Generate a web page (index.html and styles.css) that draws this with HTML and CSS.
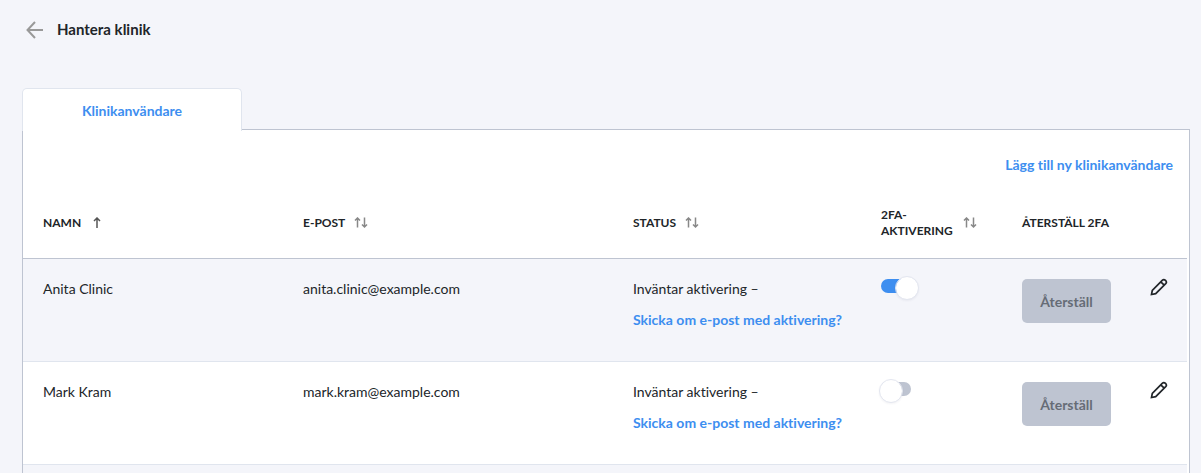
FILE: index.html
```html
<!DOCTYPE html>
<html lang="sv">
<head>
<meta charset="utf-8">
<meta name="viewport" content="width=device-width, initial-scale=1">
<title>Hantera klinik</title>
<link rel="stylesheet" href="styles.css">
</head>
<body>
<svg class="symbols" aria-hidden="true">
  <symbol id="up" viewBox="0 0 8 12"><path d="M4 11V1M1 4L4 1L7 4"/></symbol>
  <symbol id="sort" viewBox="0 0 14 12"><path d="M3.500 10.500V1M1 3.500L3.500 1L6 3.500M10.500 .5V10M8 7.500L10.500 10L13 7.500"/></symbol>
  <symbol id="pencil" viewBox="0 0 18 18"><path d="M1.500 16.500L2.300 12.300L12.200 2.300Q13.800 .8 15.500 2.400Q17.200 4.100 15.700 5.700L5.700 15.600ZM10.800 3.800L14.200 7.200"/></symbol>
</svg>
<header class="page-header">
  <button class="icon-button back" type="button" aria-label="Tillbaka">
    <svg viewBox="0 0 18 18"><path d="M17 9H1.500M9 1L1.500 9L9 17"/></svg>
  </button>
  <h1 class="title">Hantera klinik</h1>
</header>
<main class="content">
  <div class="tabs" role="tablist">
    <button class="tab" type="button" role="tab" aria-selected="true">Klinikanvändare</button>
  </div>
  <section class="panel">
    <div class="actions"><a class="link" href="#">Lägg till ny klinikanvändare</a></div>
    <table class="users">
      <colgroup>
        <col class="col-name"><col class="col-email"><col class="col-status"><col class="col-twofa"><col class="col-reset"><col class="col-edit">
      </colgroup>
      <thead>
        <tr>
          <th><span class="heading">Namn <svg class="arrow-up"><use href="#up"/></svg></span></th>
          <th><span class="heading">E-post <svg class="arrows"><use href="#sort"/></svg></span></th>
          <th><span class="heading">Status <svg class="arrows"><use href="#sort"/></svg></span></th>
          <th><span class="heading"><span class="wrap">2FA-aktivering</span> <svg class="arrows"><use href="#sort"/></svg></span></th>
          <th>Återställ 2FA</th>
          <td></td>
        </tr>
      </thead>
      <tbody>
        <tr>
          <td>Anita Clinic</td>
          <td>anita.clinic@example.com</td>
          <td><div class="status">Inväntar aktivering –</div><a class="link" href="#">Skicka om e-post med aktivering?</a></td>
          <td><input class="switch" type="checkbox" role="switch" aria-label="2FA-aktivering för Anita Clinic" checked></td>
          <td><button class="reset" type="button" disabled>Återställ</button></td>
          <td class="edit"><button class="icon-button" type="button" aria-label="Redigera Anita Clinic"><svg class="pencil"><use href="#pencil"/></svg></button></td>
        </tr>
        <tr>
          <td>Mark Kram</td>
          <td>mark.kram@example.com</td>
          <td><div class="status">Inväntar aktivering –</div><a class="link" href="#">Skicka om e-post med aktivering?</a></td>
          <td><input class="switch" type="checkbox" role="switch" aria-label="2FA-aktivering för Mark Kram"></td>
          <td><button class="reset" type="button" disabled>Återställ</button></td>
          <td class="edit"><button class="icon-button" type="button" aria-label="Redigera Mark Kram"><svg class="pencil"><use href="#pencil"/></svg></button></td>
        </tr>
        <tr><td colspan="6"></td></tr>
      </tbody>
    </table>
  </section>
</main>
</body>
</html>
```

FILE: styles.css
```css
* { box-sizing: border-box; }

body {
  display: flex;
  flex-direction: column;
  height: 100vh;
  margin: 0;
  padding: 0 11px 0 22px;
  overflow: hidden;
  background: #f4f5fa;
  color: #212529;
  font: 14px/20px Lato, "Open Sans", sans-serif;
  font-variant-ligatures: none;
}

svg {
  display: block;
  flex: none;
  fill: none;
  stroke: currentColor;
  stroke-width: 2;
}

.symbols { position: absolute; width: 0; height: 0; }

.page-header {
  display: flex;
  align-items: center;
  gap: 13px;
  height: 88px;
  padding: 0 4px 31px;
}

.title { margin: 0; font-size: 15px; line-height: 20px; font-weight: 700; }

.icon-button {
  display: block;
  padding: 0;
  border: 0;
  background: none;
  color: #212529;
  cursor: pointer;
}

.back { padding-top: 3px; color: #999; }
.back svg { width: 18px; height: 18px; }

.content { display: flex; flex: 1; flex-direction: column; min-height: 0; }

.tabs { display: flex; }

.tab {
  z-index: 1;
  width: 220px;
  height: 43px;
  margin-bottom: -2px;
  padding: 2px 0 0;
  border: 1px solid #e0e5ee;
  border-bottom: 0;
  border-radius: 5px 5px 0 0;
  background: #fff;
  color: #3d8ef0;
  font: inherit;
  font-variant-ligatures: none;
  font-weight: 700;
}

.panel {
  flex: 1;
  min-height: 0;
  padding-right: 2px;
  overflow: hidden;
  border: 1px solid #bec4d1;
  border-bottom: 0;
  background: #fff;
}

.actions { padding: 25px 14px 12px 0; text-align: right; }

.link { color: #3d8ef0; font-weight: 700; text-decoration: none; }

.users { width: 100%; border-collapse: separate; border-spacing: 0; table-layout: fixed; }

.col-name { width: 260px; }
.col-email { width: 330px; }
.col-status { width: 248px; }
.col-twofa { width: 141px; }
.col-reset { width: 128px; }

.users th, .users td { padding: 0 0 0 20px; text-align: left; }

.users thead th, .users thead td { height: 72px; border-bottom: 1px solid #bec4d1; }

.users th { font-size: 12px; line-height: 16px; font-weight: 700; text-transform: uppercase; }

.heading { display: flex; align-items: center; gap: 9px; }
.wrap { width: 73px; }

.arrow-up { width: 8px; height: 12px; margin-left: 3px; color: #555; }
.arrows { width: 14px; height: 12px; color: #888; }
.arrow-up, .arrows { stroke-width: 1.5; }

.users tbody td {
  height: 103px;
  padding-top: 20px;
  border-bottom: 1px solid #e0e5ee;
  vertical-align: top;
}

.users tbody tr:nth-child(odd) { background: #f4f5fa; }

.status { margin-bottom: 11px; }

.switch {
  appearance: none;
  display: block;
  position: relative;
  width: 30px;
  height: 14px;
  margin: 0;
  border-radius: 7px;
  background: #bec4d1;
}

.switch:checked { background: #3d8ef0; }

.switch::after {
  content: "";
  position: absolute;
  top: -3px;
  left: -2px;
  width: 22px;
  height: 22px;
  border: 1px solid #e4e7f0;
  border-radius: 50%;
  background: #fff;
  background-clip: padding-box;
  box-shadow: 0 1px 2px rgba(60, 70, 110, 0.06);
}

.switch:checked::after { left: 14px; }

.reset {
  display: block;
  min-width: 89px;
  height: 44px;
  padding: 2px 16px 0;
  border: 0;
  border-radius: 5px;
  background: #bec4d1;
  color: #666c76;
  font: inherit;
  font-variant-ligatures: none;
  font-weight: 700;
}

.users .edit { padding-top: 19px; }
.pencil { width: 18px; height: 18px; stroke-width: 1.7; }
```
